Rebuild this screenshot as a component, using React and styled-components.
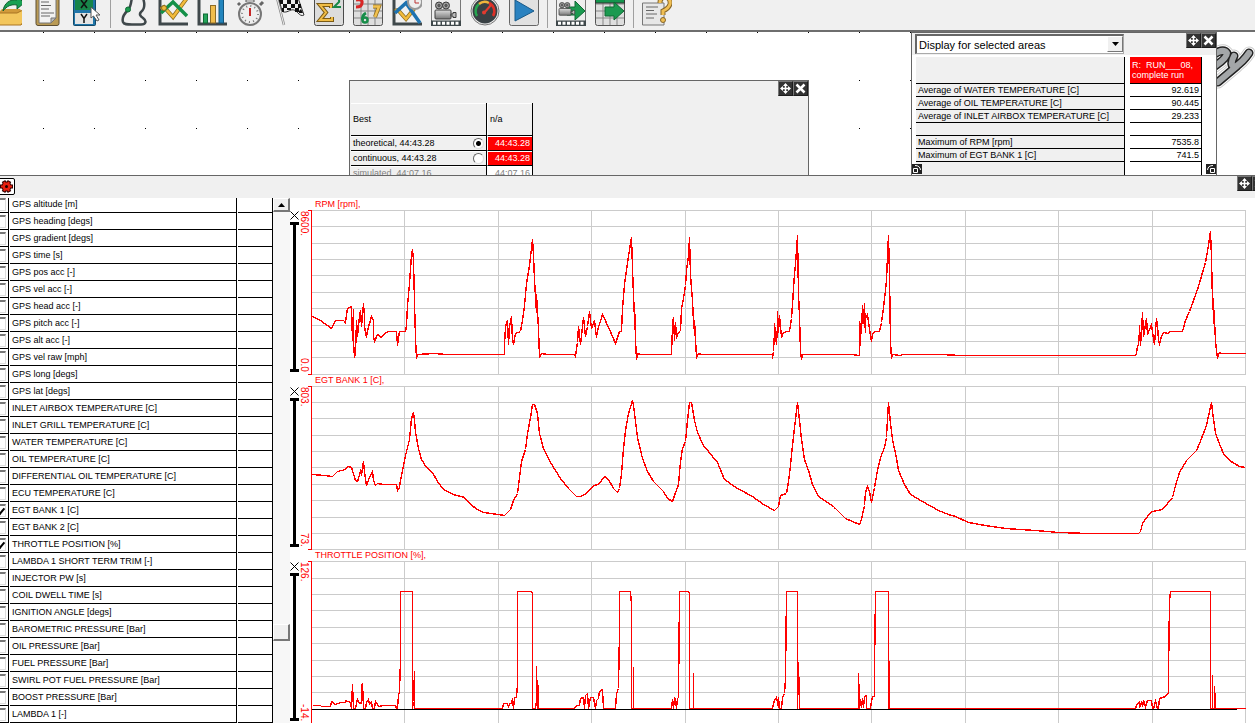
import React, { useState } from "react";
import styled, { createGlobalStyle } from "styled-components";

const GlobalStyle = createGlobalStyle`
  * {
    box-sizing: border-box;
  }
  body {
    margin: 0;
    overflow: hidden;
    background: #fff;
    color: #000;
    font-family: "Liberation Sans", Arial, sans-serif;
    font-size: 9px;
    line-height: 11px;
  }
  table {
    border-spacing: 0;
  }
  td, th {
    padding: 0;
    font-weight: normal;
    text-align: left;
  }
  button {
    padding: 0;
    border: 0;
    background: none;
  }
`;

const Page = styled.div`
  display: flex;
  flex-direction: column;
  height: 100vh;
  overflow: hidden;
`;

/* ---------- toolbar ---------- */

const Toolbar = styled.header`
  display: flex;
  flex: none;
  gap: 17px;
  height: 32px;
  margin-left: -8px;
  background: #f0f0f0;
  border-bottom: 2px solid #6e6e6e;
`;

const ToolGroup = styled.div`
  display: flex;
  gap: 9px;
  position: relative;

  &:first-child {
    margin-right: 2px;
  }
  & + &::before {
    content: "";
    position: absolute;
    left: -9px;
    top: 0;
    width: 1px;
    height: 28px;
    background: #a0a0a0;
  }
`;

const ToolButton = styled.button`
  width: 30px;
  height: 26px;

  svg {
    display: block;
  }
`;

const dark = "#3f484b";

const Axes = () => <path d="M2 -2V24H30" fill="none" stroke={dark} strokeWidth="3" />;

const FilmStrip = () => (
  <>
    <rect x="0" y="20.5" width="30" height="5.5" fill={dark} />
    <path d="M2 23.3H29" stroke="#fff" strokeWidth="3" strokeDasharray="3 1.5" />
  </>
);

const Camera = () => (
  <g fill="#888" stroke="#3d3d3d" strokeWidth="1">
    <circle cx="8" cy="5.5" r="3.5" fill="#999" />
    <circle cx="15" cy="5.5" r="3.5" fill="#999" />
    <circle cx="8" cy="5.5" r="1" />
    <circle cx="15" cy="5.5" r="1" />
    <rect x="4" y="10" width="16" height="9" rx="1" fill="url(#metal)" />
    <path d="M20 14h2v-1.500h3v5h-3v-1.500h-2z" fill="#bbb" />
  </g>
);

const GridBack = ({ top }) => (
  <>
    <rect x="0.500" y="-5" width="29" height="30.500" rx="2" fill="#dedede" stroke="#555" />
    <path d="M8 -2V25M15 -2V25M22 -2V25M1 4H29M1 11H29M1 18H29" stroke="#858585" />
    {top && <rect x="0.500" y="-4" width="29" height="7" fill="#13954d" stroke="#333" />}
  </>
);

const icons = {
  Open: (
    <>
      <path d="M6 13L10 9H28L31 13V25H6z" fill="#d19a3a" />
      <path d="M4 25V13H25L31 10V22L29 25z" fill="#f3c65c" stroke="#a97522" />
      <path d="M11 11C12 3 18 -1 25 0V-4L32 3L25 9V5C19 4 15 6 11 11z" fill="#19a052" stroke="#10602f" />
    </>
  ),
  Paste: (
    <>
      <rect x="5" y="-5" width="23" height="30.500" rx="2" fill="#b99a55" stroke="#5d4f34" />
      <path d="M8 -2H25V18L20 23H8z" fill="#f2f2f2" stroke="#777" />
      <path d="M20 23V18H25z" fill="#bbb" stroke="#777" />
      <path d="M10 2H18M10 5.500H20M10 9H18M10 13H23M10 16H19" stroke="#666" />
    </>
  ),
  "Axis channels": (
    <>
      <rect x="3.500" y="-4" width="22" height="29.500" rx="1" fill="#1f75a8" stroke="#124969" />
      <rect x="5" y="-3" width="18" height="13" fill="#17854a" />
      <rect x="5" y="13" width="18" height="11" fill="#e4e4e4" />
      <path d="M11 0L17 8M17 0L11 8" stroke="#111" strokeWidth="1.500" />
      <path d="M11 14L14 18.500L17 14M14 18V23" stroke="#111" strokeWidth="1.500" fill="none" />
      <path d="M21 7V18L23.500 16L27 21L29 20L26 15H30z" fill="#fff" stroke="#555" />
    </>
  ),
  "Track map": (
    <>
      <path
        d="M13 -3C12 3 12 7 9 10C5 14 3 19 4 22C5 24.500 8 24.500 13 24.500H22C27 24.500 28 21 24 18C21 16 20 14 22 12C26 9 26 4 24 -2"
        fill="none"
        stroke={dark}
        strokeWidth="2.500"
      />
      <circle cx="9" cy="9.500" r="2.500" fill="#1d9a4f" stroke="#0d6c34" />
    </>
  ),
  "Time distance graph": (
    <>
      <Axes />
      <path d="M3 9L6 7L15 17L29 -2" fill="none" stroke="#8b6a1c" strokeWidth="4" />
      <path d="M3 9L6 7L15 17L29 -2" fill="none" stroke="#f2bb3c" strokeWidth="2.500" />
      <path d="M3 13L15 2L29 16" fill="none" stroke="#149048" strokeWidth="3.500" />
      <circle cx="6" cy="8" r="2.500" fill="#f2bb3c" stroke="#8b6a1c" />
    </>
  ),
  Histogram: (
    <>
      <Axes />
      <rect x="6.500" y="14" width="4" height="9" fill="#25a45b" stroke="#0f6b35" />
      <rect x="13.500" y="5.500" width="5" height="17.500" fill="#f1bd4c" stroke="#8d6b26" />
      <rect x="22" y="-4" width="4.500" height="27" fill="#2385bd" stroke="#14567c" />
    </>
  ),
  "Lap times": (
    <>
      <path d="M10 2V-3H18V2" fill="#bbb" stroke="#555" />
      <path d="M24 5L27 2M4 5L2 3" stroke="#666" strokeWidth="3" />
      <circle cx="14" cy="14" r="11" fill="#eee" stroke="#777" strokeWidth="2" />
      <circle cx="14" cy="14" r="8" fill="none" stroke="#777" strokeDasharray="1 3.200" strokeWidth="2" />
      <path d="M14 8V16" stroke="#c52727" strokeWidth="2" />
    </>
  ),
  Finish: (
    <>
      <path d="M2 -2L9 25" stroke="#888" strokeWidth="2.500" />
      <path d="M2 -2L9 25" stroke="#eee" />
      <path d="M3 -5L22 -5L29 15C24 18 22 8 16 10C12 12 9 13 7 11z" fill="#eee" stroke="#333" />
      <path d="M4 0H8V4H5zM12 0H16V4H12zM20 0H23V4H20zM8 4H12V8H8zM16 4H20V8H16zM23 4H26V8H23zM7 8H9V12H7zM12 8H16V10H12zM20 8H24V12H20zM26 9L28 13H24V11z" fill="#111" />
    </>
  ),
  "Maths channels": (
    <>
      <rect x="0.500" y="-5" width="29" height="30.500" rx="2" fill="#dcdcdc" stroke="#4b4b4b" />
      <path d="M17 8V5H6L12 12.500L6 20H18V17" fill="none" stroke="#7b5b16" strokeWidth="4" />
      <path d="M17 8V5H6L12 12.500L6 20H18V17" fill="none" stroke="#f0bd46" strokeWidth="2" />
      <path d="M20 -1Q26 -2 25 2L20 7H27" fill="none" stroke="#178847" strokeWidth="2" />
    </>
  ),
  "Channel values": (
    <>
      <GridBack />
      <path d="M3 0Q10 -1 9 3Q9 7 3 7" fill="none" stroke="#d82626" strokeWidth="3" />
      <path d="M20 6.500H26L22 17" fill="none" stroke="#8b6a1c" strokeWidth="4" />
      <path d="M20 6.500H26L22 17" fill="none" stroke="#f2c14f" strokeWidth="2.500" />
      <path d="M13 13Q9 15 9.500 20" fill="none" stroke="#178d49" strokeWidth="3" />
      <circle cx="12" cy="20" r="2.500" fill="none" stroke="#178d49" strokeWidth="2.500" />
    </>
  ),
  "Time graph": (
    <>
      <Axes />
      <path d="M3 11L6 10L14 19L22 9" fill="none" stroke="#8b6a1c" strokeWidth="4" />
      <path d="M3 11L6 10L14 19L22 9" fill="none" stroke="#f2bb3c" strokeWidth="2.500" />
      <path d="M3 13L14 3L28 23" fill="none" stroke="#1d72b0" strokeWidth="3.500" />
      <circle cx="23" cy="2" r="7" fill="#eee" stroke="#999" strokeWidth="2" />
      <path d="M23 -2V3H27" fill="none" stroke="#b33" />
    </>
  ),
  Video: (
    <>
      <rect x="0.500" y="-4" width="29" height="29" fill="#eee" stroke="#777" />
      <Camera />
      <FilmStrip />
    </>
  ),
  Gauges: (
    <>
      <circle cx="15" cy="11" r="14" fill="#eee" stroke="#777" />
      <circle cx="15" cy="11" r="12.500" fill="#394144" />
      <path d="M7 16A9 9 0 0 1 9 4" fill="none" stroke="#26a64f" strokeWidth="2.500" />
      <path d="M9 4A9 9 0 0 1 19 3" fill="none" stroke="#efb53c" strokeWidth="2.500" />
      <path d="M19 3A9 9 0 0 1 23 16" fill="none" stroke="#dd3027" strokeWidth="2.500" />
      <path d="M14 13L21 5" stroke="#e23b2f" strokeWidth="2" />
      <circle cx="14" cy="12.500" r="2" fill="#e23b2f" />
    </>
  ),
  Play: (
    <>
      <rect x="0.500" y="-5" width="29" height="30.500" rx="2" fill="#e1e1e1" stroke="#666" />
      <path d="M6 0V21L25 11z" fill="#2a82c0" stroke="#195a88" />
    </>
  ),
  "Export video": (
    <>
      <rect x="0.500" y="-4" width="29" height="29" fill="#eee" stroke="#777" />
      <path d="M11 7H19V1L29 11L19 20V15H11z" fill="#1b9a50" stroke="#0e6833" />
      <g transform="translate(0 1) scale(0.75)">
        <Camera />
      </g>
      <FilmStrip />
    </>
  ),
  "Export data": (
    <>
      <GridBack top />
      <path d="M10 7H19V2L29 11L19 20V16H10z" fill="#1b9a50" stroke="#0e6833" />
    </>
  ),
  Help: (
    <>
      <path d="M0.500 3H22V25H0.500z" fill="#e7e7e7" stroke="#777" />
      <path d="M4 7H16M4 10.500H12M4 14H15M4 18H12" stroke="#666" />
      <path d="M18 3Q18 -3 23 -3Q29 -2 28 4Q27 8 21 11V15" fill="none" stroke="#86662a" strokeWidth="5" />
      <path d="M18 3Q18 -3 23 -3Q29 -2 28 4Q27 8 21 11V15" fill="none" stroke="#f0bf54" strokeWidth="3" />
      <circle cx="21" cy="20" r="2.500" fill="#f0bf54" stroke="#86662a" />
    </>
  ),
};

const toolGroups = [
  ["Open", "Paste", "Axis channels"],
  [
    "Track map",
    "Time distance graph",
    "Histogram",
    "Lap times",
    "Finish",
    "Maths channels",
    "Channel values",
    "Time graph",
    "Video",
    "Gauges",
    "Play",
  ],
  ["Export video", "Export data"],
  ["Help"],
];

/* ---------- desktop and floating windows ---------- */

const Desktop = styled.main`
  position: relative;
  flex: none;
  height: 143px;
  overflow: hidden;
  background-color: #fff;
  background-image: conic-gradient(from 270deg at 1px 1px, #000 90deg, transparent 0);
  background-size: 51px 48px;
  background-position: 43px 0;
`;

const Window = styled.section`
  position: absolute;
  left: ${(p) => p.$left}px;
  top: ${(p) => p.$top}px;
  width: ${(p) => p.$width}px;
  height: 150px;
  background: ${(p) => p.$bg};
  border: 1px solid #666;
  border-bottom: 0;
`;

const WindowButtons = styled.div`
  position: absolute;
  right: 0;
  top: 0;
  display: flex;
`;

const DarkButton = styled.button`
  width: 15px;
  height: 15px;
  flex: none;
  background: #333;
  border: 1px solid #1c1c1c;
  border-top-color: #777;
  border-left-color: #777;

  svg {
    display: block;
  }
`;

const MoveButton = () => (
  <DarkButton aria-label="Move">
    <svg width="13" height="13" viewBox="0 0 13 13">
      <path d="M6.500 2V11M2 6.500H11" stroke="#fff" strokeWidth="1.500" />
      <path d="M6.500 1L9 4H4zM6.500 12L9 9H4zM1 6.500L4 4V9zM12 6.500L9 4V9z" fill="#fff" />
    </svg>
  </DarkButton>
);

const CloseButton = () => (
  <DarkButton aria-label="Close">
    <svg width="13" height="13" viewBox="0 0 13 13">
      <path d="M2.500 2.500L10.500 10.500M10.500 2.500L2.500 10.500" stroke="#fff" strokeWidth="2.500" />
    </svg>
  </DarkButton>
);

const BestTable = styled.table`
  margin: 22px 0 0 1px;

  td, th {
    height: 15px;
    padding: 0 2px;
    border-bottom: 1px solid #000;
    border-right: 1px solid #000;
    box-shadow: inset 0 1px #fff;
  }
  th {
    height: 33px;
  }
  th:first-child, td:first-child {
    width: 136px;
  }
  th + th, td + td {
    width: 46px;
    border-left: 1px solid #fff;
  }
`;

const BestLabel = styled.label`
  display: flex;
  align-items: center;
  justify-content: space-between;
  height: 14px;
  color: ${(p) => (p.$muted ? "#808080" : "#000")};
`;

const Radio = styled.input`
  appearance: none;
  width: 11px;
  height: 11px;
  margin: 0;
  border: 1px solid #ddd;
  border-top-color: #666;
  border-left-color: #666;
  border-radius: 50%;
  background: #fff;

  &:checked {
    background: radial-gradient(circle, #000 2px, #fff 3px);
  }
`;

const LapTime = styled.td`
  text-align: right;
  color: ${(p) => (p.$muted ? "#808080" : "#fff")};
  background: ${(p) => (p.$muted ? "#fff" : "#f00")};
`;

const StatsHead = styled.div`
  display: flex;
  align-items: center;
  height: 22px;
  padding-left: 3px;
  background: #f0f0f0;
`;

const SelectBox = styled.div`
  position: relative;
  width: 209px;

  select {
    appearance: none;
    display: block;
    width: 100%;
    height: 20px;
    padding: 0 2px;
    font: 11px "Liberation Sans", Arial, sans-serif;
    color: #000;
    background: #fff;
    border: 1px solid #aaa;
    border-top: 2px solid #666;
    border-left: 2px solid #666;
    border-radius: 0;
  }
  svg {
    position: absolute;
    right: 1px;
    top: 2px;
    background: #f0f0f0;
    border: 1px solid #fff;
    border-right-color: #777;
    border-bottom-color: #777;
    pointer-events: none;
  }
`;

const StatsTable = styled.table`
  margin: 2px 0 0 4px;

  th, td {
    height: 13px;
    padding: 0 2px;
    line-height: 10px;
    border-bottom: 1px solid #000;
    border-right: 1px solid #000;
  }
  th {
    width: 209px;
    background: #f0f0f0;
    white-space: nowrap;
  }
  td:nth-child(2) {
    width: 5px;
    padding: 0;
    border: 0;
  }
  td:last-child {
    width: 72px;
    text-align: right;
  }
  thead th {
    height: 27px;
  }
  tbody tr:last-child > * {
    border-bottom: 0;
  }
`;

const RunCell = styled.td`
  &&& {
    text-align: left;
    vertical-align: top;
    padding-top: 3px;
    color: #fff;
    background: #f00;
    white-space: pre;
  }
`;

const CornerGrip = styled.div`
  position: absolute;
  top: 131px;
  left: ${(p) => (p.$right ? "auto" : 0)};
  right: ${(p) => (p.$right ? 0 : "auto")};
  transform: ${(p) => (p.$right ? "scaleX(-1)" : "none")};
  width: 10px;
  height: 10px;

  svg {
    display: block;
  }
`;

const Logo = styled.svg`
  position: absolute;
  left: 1217px;
  top: 12px;
`;

const stats = [
  ["Average of WATER TEMPERATURE [C]", "92.619"],
  ["Average of OIL TEMPERATURE [C]", "90.445"],
  ["Average of INLET AIRBOX TEMPERATURE [C]", "29.233"],
  ["", ""],
  ["Maximum of RPM [rpm]", "7535.8"],
  ["Maximum of EGT BANK 1 [C]", "741.5"],
  ["", ""],
];

const BestWindow = () => {
  const [best, setBest] = useState("theoretical");
  return (
    <Window $left={349} $top={48} $width={460} $bg="#f0f0f0">
      <WindowButtons>
        <MoveButton />
        <CloseButton />
      </WindowButtons>
      <BestTable>
        <tbody>
          <tr>
            <th>Best</th>
            <th>n/a</th>
          </tr>
          {["theoretical", "continuous"].map((name) => (
            <tr key={name}>
              <td>
                <BestLabel>
                  {name}, 44:43.28
                  <Radio type="radio" name="best" checked={best === name} onChange={() => setBest(name)} />
                </BestLabel>
              </td>
              <LapTime>44:43.28</LapTime>
            </tr>
          ))}
          <tr>
            <td>
              <BestLabel as="span" $muted>
                simulated, 44:07.16
              </BestLabel>
            </td>
            <LapTime $muted>44:07.16</LapTime>
          </tr>
        </tbody>
      </BestTable>
    </Window>
  );
};

const Grip = ({ right }) => (
  <CornerGrip $right={right}>
    <svg width="10" height="10" viewBox="0 0 10 10">
      <rect width="10" height="10" fill="#222" />
      <path d="M1.500 4.500H5.500V8.500H1.500z" fill="none" stroke="#fff" />
      <path d="M3 1.500Q8 1.500 8.500 6" fill="none" stroke="#fff" />
    </svg>
  </CornerGrip>
);

const StatsWindow = () => (
  <Window $left={911} $top={0} $width={306} $bg="#fff">
    <StatsHead>
      <SelectBox>
        <select aria-label="Display">
          <option>Display for selected areas</option>
        </select>
        <svg width="16" height="16" viewBox="0 0 14 14">
          <path d="M4 5H11L7.500 9z" fill="#000" />
        </svg>
      </SelectBox>
    </StatsHead>
    <WindowButtons>
      <MoveButton />
      <CloseButton />
    </WindowButtons>
    <StatsTable>
      <thead>
        <tr>
          <th />
          <td />
          <RunCell>{"R:  RUN___08,\ncomplete run"}</RunCell>
        </tr>
      </thead>
      <tbody>
        {stats.map(([label, value], i) => (
          <tr key={i}>
            <th>{label}</th>
            <td />
            <td>{value}</td>
          </tr>
        ))}
      </tbody>
    </StatsTable>
    <Grip />
    <Grip right />
  </Window>
);

const logoStrokes = "M-4 11Q6 4 10 9Q10 14 -2 22M17 12Q12 22 18 23Q26 18 32 9M20 22L1 38";

/* ---------- channel panel ---------- */

const Panel = styled.section`
  display: flex;
  flex-direction: column;
  flex: 1;
  min-height: 0;
  border-top: 1px solid #666;
`;

const PanelBar = styled.div`
  display: flex;
  align-items: center;
  justify-content: space-between;
  flex: none;
  height: 22px;
  margin-right: -12px;
  padding-bottom: 2px;
  background: #f0f0f0;
`;

const BarButtons = styled.div`
  display: flex;
  align-self: flex-start;
`;

const GearButton = styled.button`
  width: 17px;
  height: 17px;
  margin-left: -2px;
  border: 1px solid #000;
  border-radius: 2px;
  background: #fff;

  svg {
    display: block;
  }
`;

const PanelBody = styled.div`
  display: flex;
  flex: 1;
  min-height: 0;
  overflow: hidden;
`;

const ChannelList = styled.div`
  flex: none;
  width: 273px;
  overflow: hidden;
`;

const ChannelTable = styled.table`
  width: 275px;
  margin: -2px 0 0 -1px;
  table-layout: fixed;
  border-spacing: 1px 0;

  td {
    height: 17px;
    border-right: 1px solid #000;
    border-bottom: 1px solid #000;
    white-space: nowrap;
  }
  td:nth-child(1) {
    width: 9px;
  }
  td:nth-child(2) {
    padding-left: 2px;
  }
  td:nth-child(3) {
    width: 35px;
  }
  label {
    display: block;
  }
`;

const Check = styled.input`
  appearance: none;
  display: block;
  position: relative;
  width: 13px;
  height: 13px;
  margin: 0 0 0 -7px;
  background: #fff;
  border: 1px solid #ddd;
  border-top: 2px solid #777;

  &:checked::after {
    content: "";
    position: absolute;
    right: 2px;
    top: 0;
    width: 4px;
    height: 7px;
    border: solid #000;
    border-width: 0 2px 2px 0;
    transform: rotate(40deg);
  }
`;

const ScrollBar = styled.div`
  display: flex;
  flex-direction: column;
  flex: none;
  width: 17px;
  background: #f7f7f7;
`;

const ScrollPart = styled.button`
  flex: none;
  height: ${(p) => p.$height}px;
  background: #f0f0f0;
  border: 1px solid #fff;
  border-right: 2px solid #777;
  border-bottom: 2px solid #777;

  svg {
    display: block;
    margin: auto;
  }
`;

const Track = styled.div`
  flex: ${(p) => p.$share};
`;

const Charts = styled.div`
  flex: 1;
  min-width: 0;
`;

const ChartRow = styled.div`
  display: grid;
  grid-template: 12px ${(p) => p.$height}px / 10px 11px 1fr;
  padding-right: 9px;
  color: #f00;
`;

const ChartTitle = styled.div`
  grid-column: 3;
  padding-left: 4px;
  line-height: 13px;
`;

const RangeSlider = styled.div`
  display: flex;
  flex-direction: column;
  align-items: flex-start;
  padding-top: 1px;

  svg {
    display: block;
  }
`;

const RangeBar = styled.div`
  flex: 1;
  width: 9px;
  margin: 2px 0;
  border: solid #000;
  border-width: 3px 0;
  background: linear-gradient(#000, #000) center / 3px 100% no-repeat;
`;

const Scale = styled.div`
  display: flex;
  justify-content: space-between;
  padding: 1px 2px 2px 0;
  writing-mode: vertical-rl;
  font-size: 10px;
  line-height: 9px;
`;

const Plot = styled.svg`
  display: block;
  width: 100%;
  height: 100%;
  overflow: visible;
  shape-rendering: crispEdges;

  path, polyline {
    fill: none;
    vector-effect: non-scaling-stroke;
  }
  polyline {
    stroke-width: 1.4px;
  }
`;

const channels = [
  "GPS altitude [m]",
  "GPS heading [degs]",
  "GPS gradient [degs]",
  "GPS time [s]",
  "GPS pos acc [-]",
  "GPS vel acc [-]",
  "GPS head acc [-]",
  "GPS pitch acc [-]",
  "GPS alt acc [-]",
  "GPS vel raw [mph]",
  "GPS long [degs]",
  "GPS lat [degs]",
  "INLET AIRBOX TEMPERATURE [C]",
  "INLET GRILL TEMPERATURE [C]",
  "WATER TEMPERATURE [C]",
  "OIL TEMPERATURE [C]",
  "DIFFERENTIAL OIL TEMPERATURE [C]",
  "ECU TEMPERATURE [C]",
  "EGT BANK 1 [C]",
  "EGT BANK 2 [C]",
  "THROTTLE POSITION [%]",
  "LAMBDA 1 SHORT TERM TRIM [-]",
  "INJECTOR PW [s]",
  "COIL DWELL TIME [s]",
  "IGNITION ANGLE [degs]",
  "BAROMETRIC PRESSURE [Bar]",
  "OIL PRESSURE [Bar]",
  "FUEL PRESSURE [Bar]",
  "SWIRL POT FUEL PRESSURE [Bar]",
  "BOOST PRESSURE [Bar]",
  "LAMBDA 1 [-]",
];

const selected = ["EGT BANK 1 [C]", "THROTTLE POSITION [%]"];

const columns = [404, 498, 591, 685, 778, 871, 965, 1058, 1152, 1245];

const charts = [
  {
    title: "RPM [rpm],",
    max: "8600.",
    min: "0.0",
    top: 210,
    height: 164,
    lines: [210, 226, 243, 259, 275, 292, 308, 325, 341, 357, 374],
    trace:
      "312,316 320,320 331,328 335,320 343,320 345,322 347,308 351,306 352,340 353,309 353,342 354,357 355,353 356,320 357,336 359,316 360,310 361,326 363,303 364,316 364,326 366,337 367,330 371,316 373,320 373,336 374,341 377,334 381,337 385,332 389,331 396,331 397,345 399,331 405,331 406,325 407,305 409,283 411,255 412,249 413,260 414,302 415,338 416,358 417,354 433,353 447,354 502,354 504,354 504,344 505,326 507,320 508,344 509,326 511,316 512,340 513,344 515,333 520,331 522,320 524,305 526,283 529,265 531,248 532,239 533,255 534,280 536,312 536,294 538,328 539,357 541,353 547,354 574,354 575,356 577,342 578,326 580,344 583,317 585,336 587,326 589,311 591,328 594,320 596,337 597,330 602,314 609,329 615,343 619,331 621,331 622,308 624,284 627,262 630,243 " +
      "631,237 632,268 633,296 634,318 634,302 635,340 636,359 637,353 640,354 671,354 671,335 672,344 672,322 673,317 674,340 675,322 676,338 677,333 680,331 681,308 683,298 685,285 686,270 688,255 689,237 690,275 692,300 693,322 693,312 694,335 694,320 696,357 698,353 701,354 727,354 772,354 772,358 773,351 774,332 774,323 776,344 777,325 777,311 778,332 779,315 781,337 783,332 787,331 789,331 791,318 792,304 793,288 794,274 795,264 796,250 797,235 798,294 799,316 800,351 801,359 802,354 851,354 859,355 859,320 859,350 861,318 861,333 862,305 864,327 864,303 865,332 865,318 867,314 869,329 871,341 872,333 875,331 879,331 881,322 883,307 885,290 886,280 887,255 888,235 889,275 890,342 891,358 892,354 899,355 903,354 940,354 960,355 1135,355 " +
      "1136,353 1137,346 1138,345 1139,330 1139,325 1140,345 1141,331 1142,312 1143,336 1146,318 1147,334 1151,324 1153,338 1154,344 1156,318 1157,325 1158,340 1159,343 1161,336 1163,332 1168,333 1169,331 1182,331 1185,320 1189,311 1193,300 1198,286 1202,272 1205,262 1208,245 1210,231 1211,257 1212,302 1213,312 1213,298 1214,334 1214,320 1215,340 1216,350 1217,357 1219,352 1221,353 1245,353",
  },
  {
    title: "EGT BANK 1 [C],",
    max: "803.",
    min: "73.",
    top: 386,
    height: 163,
    lines: [386, 402, 418, 435, 451, 467, 484, 500, 517, 533, 549],
    trace:
      "312,474 324,475 332,476 337,471 345,469 348,466 351,467 355,480 357,481 360,471 361,475 363,461 364,471 366,485 369,477 372,471 373,480 375,485 377,483 383,484 396,484 397,490 399,487 400,480 403,465 405,455 407,447 409,439 411,418 413,412 414,420 415,432 418,448 421,459 426,467 432,472 437,481 443,489 453,494 464,497 470,504 477,509 483,512 498,514 504,515 506,513 510,509 513,500 517,493 519,477 521,461 525,449 527,433 530,417 532,404 534,404 537,413 539,433 543,448 550,462 560,478 568,488 576,496 580,496 586,493 592,486 599,483 604,476 608,479 613,488 617,492 619,488 621,473 623,448 625,430 628,413 632,400 633,405 635,421 637,437 642,458 647,471 653,481 663,491 667,498 672,501 674,495 678,484 680,461 682,448 685,441 687,420 689,402 691,402 694,420 697,432 703,445 717,462 724,479 737,488 752,496 763,504 774,510 " +
      "778,506 780,495 786,493 788,481 790,465 792,445 794,427 797,402 799,420 801,439 804,459 808,470 812,484 818,496 833,506 845,518 859,524 861,519 864,505 865,492 867,486 869,491 871,502 874,487 877,470 880,457 884,447 886,437 887,418 888,402 890,423 892,439 896,458 898,470 904,484 910,494 922,501 938,510 948,514 955,516 968,522 985,525 1005,528 1035,530 1058,532 1088,533 1138,533 1140,531 1142,523 1147,516 1152,511 1162,509 1172,497 1175,485 1179,472 1186,460 1196,450 1199,443 1206,425 1209,411 1211,402 1212,411 1215,433 1220,446 1223,453 1229,460 1239,466 1245,467",
  },
  {
    title: "THROTTLE POSITION [%],",
    max: "126.",
    min: "-14.",
    top: 561,
    height: 162,
    zero: 709,
    lines: [561, 578, 594, 610, 627, 643, 660, 676, 692],
    trace:
      "312,705 320,705 321,706 330,706 331,701 335,704 340,702 345,702 345,700 350,702 351,708 352,684 353,708 355,708 357,698 358,702 361,703 361,686 362,683 363,708 365,708 366,702 368,699 369,704 371,702 372,708 374,708 375,701 377,704 378,706 383,705 395,705 396,708 397,708 398,695 399,691 400,660 400,591 412,591 412,708 413,701 414,671 414,708 502,708 503,703 507,703 508,707 509,703 511,703 512,698 513,708 514,697 516,697 517,684 517,591 531,591 532,593 532,708 535,708 536,700 536,666 537,708 537,685 538,685 538,708 574,708 576,705 579,705 580,698 583,697 584,708 585,695 587,693 588,708 590,697 593,697 595,708 596,700 598,698 599,691 602,689 603,708 615,708 616,693 618,688 619,630 619,591 630,591 631,605 631,708 633,708 633,666 633,708 671,708 672,699 673,708 674,697 675,698 676,708 677,698 678,697 679,591 688,591 689,593 689,708 693,708 693,672 693,708 772,708 773,703 774,700 " +
      "776,697 778,707 778,697 779,708 781,708 782,697 784,693 785,678 786,591 797,591 797,708 798,662 799,708 799,679 799,708 858,708 858,673 859,708 860,699 861,707 862,698 863,707 864,696 866,695 866,708 870,708 871,701 872,696 874,696 874,669 875,591 888,591 888,708 889,661 889,708 1135,708 1136,705 1139,702 1139,707 1141,702 1142,706 1143,700 1145,706 1147,700 1151,700 1152,708 1153,708 1155,701 1157,708 1158,708 1159,698 1165,696 1168,692 1168,674 1169,600 1170,591 1210,591 1210,708 1212,708 1212,674 1212,708 1214,708 1214,686 1215,708 1245,708",
  },
];

const Chart = ({ chart }) => {
  const { title, max, min, top, height, lines, zero, trace } = chart;
  const bottom = top + height;
  const grid =
    lines.map((y) => `M311 ${y}H1245`).join("") + columns.map((x) => `M${x} ${top}V${bottom}`).join("");

  return (
    <ChartRow $height={height}>
      <ChartTitle>{title}</ChartTitle>
      <RangeSlider>
        <svg width="9" height="9" viewBox="0 0 9 9">
          <path d="M0.500 0.500L8.500 8.500M8.500 0.500L0.500 8.500" stroke="#000" />
        </svg>
        <RangeBar />
      </RangeSlider>
      <Scale>
        <span>{max}</span>
        <span>{min}</span>
      </Scale>
      <Plot viewBox={`311 ${top} 935 ${height}`} preserveAspectRatio="none">
        <g transform="translate(0.5 0.5)">
          <path d={grid} stroke="#cbcbcb" />
          {zero && <path d={`M311 ${zero}H1236`} stroke="#000" />}
          <polyline points={trace} stroke="#f00" />
          <path d={`M307 ${top}H311V${bottom}H307`} stroke="#f00" />
        </g>
      </Plot>
    </ChartRow>
  );
};

const ChannelRow = ({ name }) => {
  const [on, setOn] = useState(selected.includes(name));
  const id = name.replace(/\W+/g, "-");
  return (
    <tr>
      <td>
        <Check id={id} type="checkbox" checked={on} onChange={() => setOn(!on)} />
      </td>
      <td>
        <label htmlFor={id}>{name}</label>
      </td>
      <td />
    </tr>
  );
};

export default function App() {
  return (
    <Page>
      <GlobalStyle />
      <Toolbar>
        {toolGroups.map((group) => (
          <ToolGroup key={group[0]}>
            {group.map((name) => (
              <ToolButton key={name} aria-label={name}>
                <svg width="30" height="26" viewBox="0 0 30 26">
                  <defs>
                    <linearGradient id="metal" x2="0" y2="1">
                      <stop offset="0" stopColor="#ddd" />
                      <stop offset="1" stopColor="#777" />
                    </linearGradient>
                  </defs>
                  {icons[name]}
                </svg>
              </ToolButton>
            ))}
          </ToolGroup>
        ))}
      </Toolbar>

      <Desktop>
        <Logo width="40" height="48" viewBox="0 0 40 48" fill="none" strokeLinecap="round" strokeLinejoin="round">
          <path d={logoStrokes} stroke="#ccc" strokeWidth="13" />
          <path d={logoStrokes} stroke="#fff" strokeWidth="11" />
          <path d={logoStrokes} stroke="#222" strokeWidth="9" />
          <path d={logoStrokes} stroke="#a3a6a8" strokeWidth="6" />
        </Logo>
        <BestWindow />
        <StatsWindow />
      </Desktop>

      <Panel>
        <PanelBar>
          <GearButton aria-label="Settings">
            <svg width="15" height="15" viewBox="0 0 15 15">
              <path d="M1 7.500H14M4.500 2L10.500 13M10.500 2L4.500 13" stroke="#300" strokeWidth="4" />
              <circle cx="7.500" cy="7.500" r="5" fill="#300" />
              <path d="M2 7.500H13M5 3L10 12M10 3L5 12" stroke="#e8200f" strokeWidth="2" />
              <circle cx="7.500" cy="7.500" r="4" fill="#e8200f" />
              <circle cx="7.500" cy="7.500" r="1.500" fill="#200" />
            </svg>
          </GearButton>
          <BarButtons>
            <MoveButton />
            <CloseButton />
          </BarButtons>
        </PanelBar>
        <PanelBody>
          <ChannelList>
            <ChannelTable>
              <tbody>
                {channels.map((name) => (
                  <ChannelRow key={name} name={name} />
                ))}
              </tbody>
            </ChannelTable>
          </ChannelList>
          <ScrollBar>
            <ScrollPart $height={14} aria-label="Scroll up">
              <svg width="7" height="4" viewBox="0 0 7 4">
                <path d="M0 4L3.500 0L7 4z" />
              </svg>
            </ScrollPart>
            <Track $share={5} />
            <ScrollPart $height={17} aria-label="Scroll position" />
            <Track $share={1} />
          </ScrollBar>
          <Charts>
            {charts.map((chart) => (
              <Chart key={chart.title} chart={chart} />
            ))}
          </Charts>
        </PanelBody>
      </Panel>
    </Page>
  );
}
